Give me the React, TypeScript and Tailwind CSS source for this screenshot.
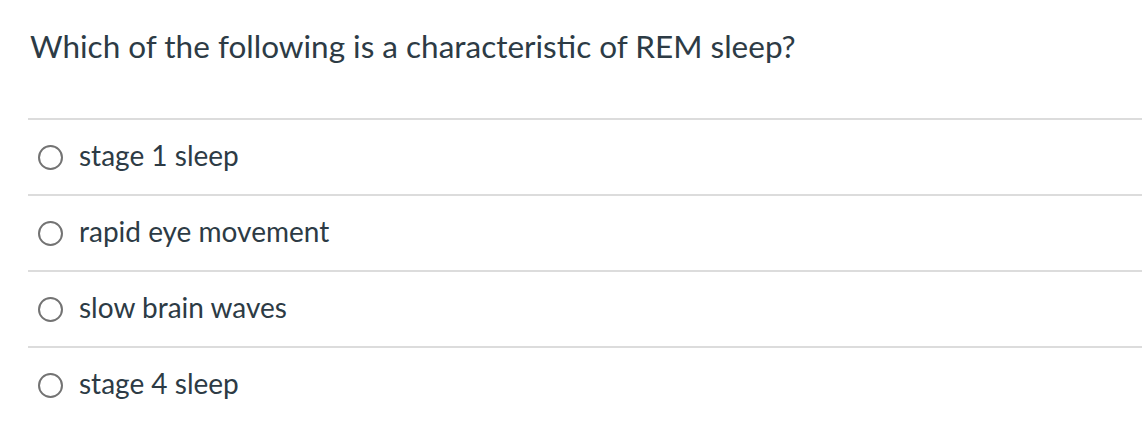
const options = ['stage 1 sleep', 'rapid eye movement', 'slow brain waves', 'stage 4 sleep'];

export default function App() {
    return (
        <div className="min-h-screen bg-white text-[#2d3b45]" style={{ fontFamily: 'Lato, "Noto Sans", sans-serif' }}>
            <div className="pl-[28px] pt-[26px]">
                <h1 className="text-[31.5px] leading-[40px] pl-[2px] mb-[52px]">
                    Which of the following is a characteristic of REM sleep?
                </h1>
                <div>
                    {options.map((opt) => (
                        <label key={opt} className="flex items-center h-[76px] border-t-2 border-[#dcdcdc] pl-[10px] cursor-pointer">
                            <span className="w-[25px] h-[25px] rounded-full border-2 border-[#737373] shrink-0" />
                            <span className="ml-[16px] text-[28px] leading-[30px] -mt-[4px]">{opt}</span>
                        </label>
                    ))}
                </div>
            </div>
        </div>
    );
}
